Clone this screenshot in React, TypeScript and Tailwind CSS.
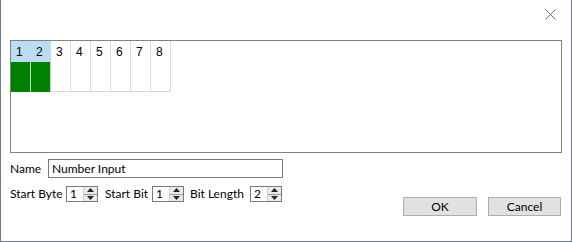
import React from 'react';

const bits = [1, 2, 3, 4, 5, 6, 7, 8];
const selected = [1, 2];

function SpinBox({ value }: { value: string }) {
  return (
    <div className="flex h-[16px] w-[32px] border border-[#7a7a7a] bg-white">
      <div className="flex-1 pl-[3px] text-[12px] leading-[14px] text-black">{value}</div>
      <div className="flex w-[14px] flex-col border-l border-[#cfcfcf] bg-[#e9e9e9]">
        <div className="flex flex-1 items-center justify-center border-b border-[#9a9a9a]">
          <svg width="7" height="4" viewBox="0 0 7 4">
            <path d="M3.5 0 L7 4 L0 4 Z" fill="#222" />
          </svg>
        </div>
        <div className="flex flex-1 items-center justify-center">
          <svg width="7" height="4" viewBox="0 0 7 4">
            <path d="M0 0 L7 0 L3.5 4 Z" fill="#222" />
          </svg>
        </div>
      </div>
    </div>
  );
}

export default function App() {
  return (
    <div
      className="flex h-[242px] w-[572px] flex-col border-x border-b border-[#6b7c8d] bg-white px-[9px] text-[12px] text-black"
      style={{ fontFamily: 'Lato, "Segoe UI", sans-serif' }}
    >
      {/* title area with close button */}
      <div className="flex h-[40px] items-start justify-end pr-[6px] pt-[9px]">
        <svg width="11" height="11" viewBox="0 0 11 11">
          <path d="M0.5 0.5 L10.5 10.5 M10.5 0.5 L0.5 10.5" stroke="#6f6f6f" strokeWidth="1" />
        </svg>
      </div>

      {/* bit grid */}
      <div className="h-[113px] border border-[#828282] bg-white">
        <div className="flex" style={{ fontFamily: '"Liberation Sans", Arial, sans-serif' }}>
          {bits.map((b) => {
            const on = selected.includes(b);
            return (
              <div key={b} className="flex w-[20px] flex-col">
                <div
                  className={`flex h-[21px] items-center pl-[5px] pt-[1px] text-[12px] ${
                    on ? 'bg-[#bcdcf4]' : 'border-r border-[#dadada]'
                  }`}
                >
                  {b}
                </div>
                <div
                  className={`h-[30px] ${
                    on ? 'border-r border-[#bfe0bf] bg-[#008000]' : 'border-b border-r border-[#dadada]'
                  }`}
                />
              </div>
            );
          })}
        </div>
      </div>

      {/* fields + buttons */}
      <div className="mt-[6px] flex justify-between">
        <div className="flex flex-col">
          <div className="flex h-[19px] items-center">
            <span className="w-[38px]">Name</span>
            <div className="flex h-[19px] w-[235px] items-center border border-[#7a7a7a] pl-[3px]">
              Number Input
            </div>
          </div>
          <div className="mt-[8px] flex h-[16px] items-center">
            <span className="w-[56px]">Start Byte</span>
            <SpinBox value="1" />
            <span className="ml-[7px] w-[47px]">Start Bit</span>
            <SpinBox value="1" />
            <span className="ml-[6px] w-[60px]">Bit Length</span>
            <SpinBox value="2" />
          </div>
        </div>
        <div className="mr-[1px] mt-[38px] flex gap-[11px]">
          <button className="h-[19px] w-[74px] border border-[#adadad] bg-[#e1e1e1] leading-none">OK</button>
          <button className="h-[19px] w-[73px] border border-[#adadad] bg-[#e1e1e1] leading-none">Cancel</button>
        </div>
      </div>
    </div>
  );
}
